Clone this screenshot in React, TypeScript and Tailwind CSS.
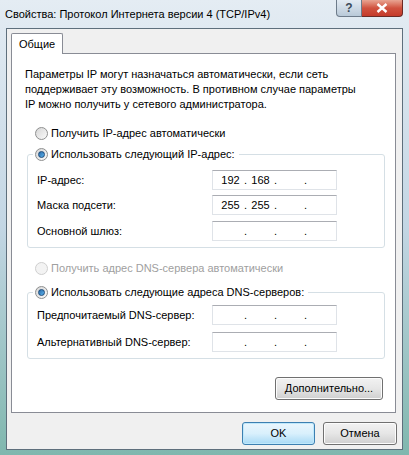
import React from "react";

interface RadioProps {
  checked?: boolean;
  disabled?: boolean;
}

const Radio = ({ checked, disabled }: RadioProps) => (
  <span
    className={`inline-flex h-[13px] w-[13px] shrink-0 items-center justify-center rounded-full border ${
      disabled
        ? "border-[#cfcfcf] bg-[#f3f3f3]"
        : "border-[#8e8f8f] bg-gradient-to-br from-[#d6d6d6] to-[#fbfbfb]"
    }`}
  >
    {checked && (
      <span className="h-[7px] w-[7px] rounded-full border border-[#1b4a7a] bg-gradient-to-br from-[#2a6aa8] to-[#5db4ee]" />
    )}
  </span>
);

const IpBox = ({ parts }: { parts: string[] }) => (
  <div className="ml-auto mr-[47px] flex h-[20px] w-[125px] items-center border border-[#dfe3e8] border-t-[#abadb3] bg-white pl-[4px] text-[11px] text-black">
    {parts.map((p, i) => (
      <React.Fragment key={i}>
        <span className="w-[27px] text-center">{p}</span>
        {i < 3 && <span className="w-[3px] text-center">.</span>}
      </React.Fragment>
    ))}
  </div>
);

const Row = ({ label, parts, top }: { label: string; parts: string[]; top: string }) => (
  <div className={`flex items-center pl-[9px] ${top}`}>
    <span className="text-[11px] leading-[15px]">{label}</span>
    <IpBox parts={parts} />
  </div>
);

const Button = ({ label, primary, className }: { label: string; primary?: boolean; className?: string }) => (
  <button
    className={`flex h-[23px] items-center justify-center whitespace-nowrap rounded-[3px] border text-[11px] text-black ${
      primary
        ? "border-[#3c7fb1] bg-gradient-to-b from-[#eaf6fd] via-[#d9f0fc] to-[#a7d9f5] shadow-[inset_0_0_0_1px_#bfe8fb]"
        : "border-[#707070] bg-gradient-to-b from-[#f2f2f2] via-[#e6e6e6] to-[#cfcfcf] shadow-[inset_0_0_0_1px_#fcfcfc]"
    } ${className ?? ""}`}
  >
    {label}
  </button>
);

export default function App() {
  return (
    <div
      className="h-[455px] w-[409px] overflow-hidden whitespace-nowrap bg-gradient-to-b from-[#e4ecf3] via-[#c3d6e4] to-[#7fb7ae] text-black"
      style={{ fontFamily: '"Liberation Sans", Arial, sans-serif' }}
    >
      {/* title bar */}
      <div className="relative flex h-[28px] items-center pl-[5px]">
        <span className="text-[11px] leading-[15px] text-black">
          Свойства: Протокол Интернета версии 4 (TCP/IPv4)
        </span>
        <div className="absolute right-[6px] top-0 flex">
          <div className="flex h-[17px] w-[26px] items-center justify-center rounded-bl-[4px] border border-t-0 border-[#6d7b8a] bg-gradient-to-b from-[#e3ebf3] to-[#b9c9d8] text-[12px] font-bold text-[#3b4a5a]">
            ?
          </div>
          <div className="flex h-[17px] w-[41px] items-center justify-center rounded-br-[4px] border border-l-0 border-t-0 border-[#6b2a25] bg-gradient-to-b from-[#e8a492] via-[#d0523f] to-[#c43a2a]">
            <svg width="12" height="10" viewBox="0 0 12 10">
              <path d="M1.5 1 L10.5 9 M10.5 1 L1.5 9" stroke="#fff" strokeWidth="2.4" />
            </svg>
          </div>
        </div>
      </div>

      {/* client area */}
      <div className="ml-[6px] h-[422px] w-[397px] border border-[#5e6f7c] bg-[#f0f0f0] pl-[4px] pt-[4px]">
        <div className="relative z-10 -mb-px flex h-[21px] w-[52px] items-center rounded-t-[2px] border border-b-0 border-[#898c95] bg-white pl-[7px] text-[11px]">
          Общие
        </div>
        <div className="flex h-[360px] w-[385px] flex-col border border-[#898c95] bg-white pl-[13px] pr-[12px] pt-[13px]">
          <p className="text-[11px] leading-[15px]">
            Параметры IP могут назначаться автоматически, если сеть
            <br />
            поддерживает эту возможность. В противном случае параметры
            <br />
            IP можно получить у сетевого администратора.
          </p>

          <div className="mt-[14px] flex h-[15px] items-center gap-[3px] pl-[10px]">
            <Radio />
            <span className="text-[11px] leading-[15px]">Получить IP-адрес автоматически</span>
          </div>

          <div className="relative ml-[2px] mt-[13px] w-[358px] rounded-[3px] border border-[#d5dfe5] pb-[6px] pt-[15px]">
            <div className="absolute -top-[8px] left-[5px] flex h-[15px] items-center gap-[3px] bg-white pl-[2px] pr-[4px]">
              <Radio checked />
              <span className="text-[11px] leading-[15px]">Использовать следующий IP-адрес:</span>
            </div>
            <Row label="IP-адрес:" parts={["192", "168", "", ""]} top="" />
            <Row label="Маска подсети:" parts={["255", "255", "", ""]} top="mt-[5px]" />
            <Row label="Основной шлюз:" parts={["", "", "", ""]} top="mt-[6px]" />
          </div>

          <div className="mt-[13px] flex h-[15px] items-center gap-[3px] pl-[10px]">
            <Radio disabled />
            <span className="text-[11px] leading-[15px] text-[#a0a0a0]">
              Получить адрес DNS-сервера автоматически
            </span>
          </div>

          <div className="relative ml-[2px] mt-[16px] w-[358px] rounded-[3px] border border-[#d5dfe5] pb-[6px] pt-[12px]">
            <div className="absolute -top-[8px] left-[5px] flex h-[15px] items-center gap-[3px] bg-white pl-[2px] pr-[4px]">
              <Radio checked />
              <span className="text-[11px] leading-[15px]">
                Использовать следующие адреса DNS-серверов:
              </span>
            </div>
            <Row label="Предпочитаемый DNS-сервер:" parts={["", "", "", ""]} top="" />
            <Row label="Альтернативный DNS-сервер:" parts={["", "", "", ""]} top="mt-[7px]" />
          </div>

          <div className="mt-[18px] flex justify-end">
            <Button label="Дополнительно..." className="w-[108px]" />
          </div>
        </div>

        <div className="mt-[9px] flex justify-end gap-[8px] pr-[5px]">
          <Button label="OK" primary className="w-[73px]" />
          <Button label="Отмена" className="w-[74px]" />
        </div>
      </div>
    </div>
  );
}
